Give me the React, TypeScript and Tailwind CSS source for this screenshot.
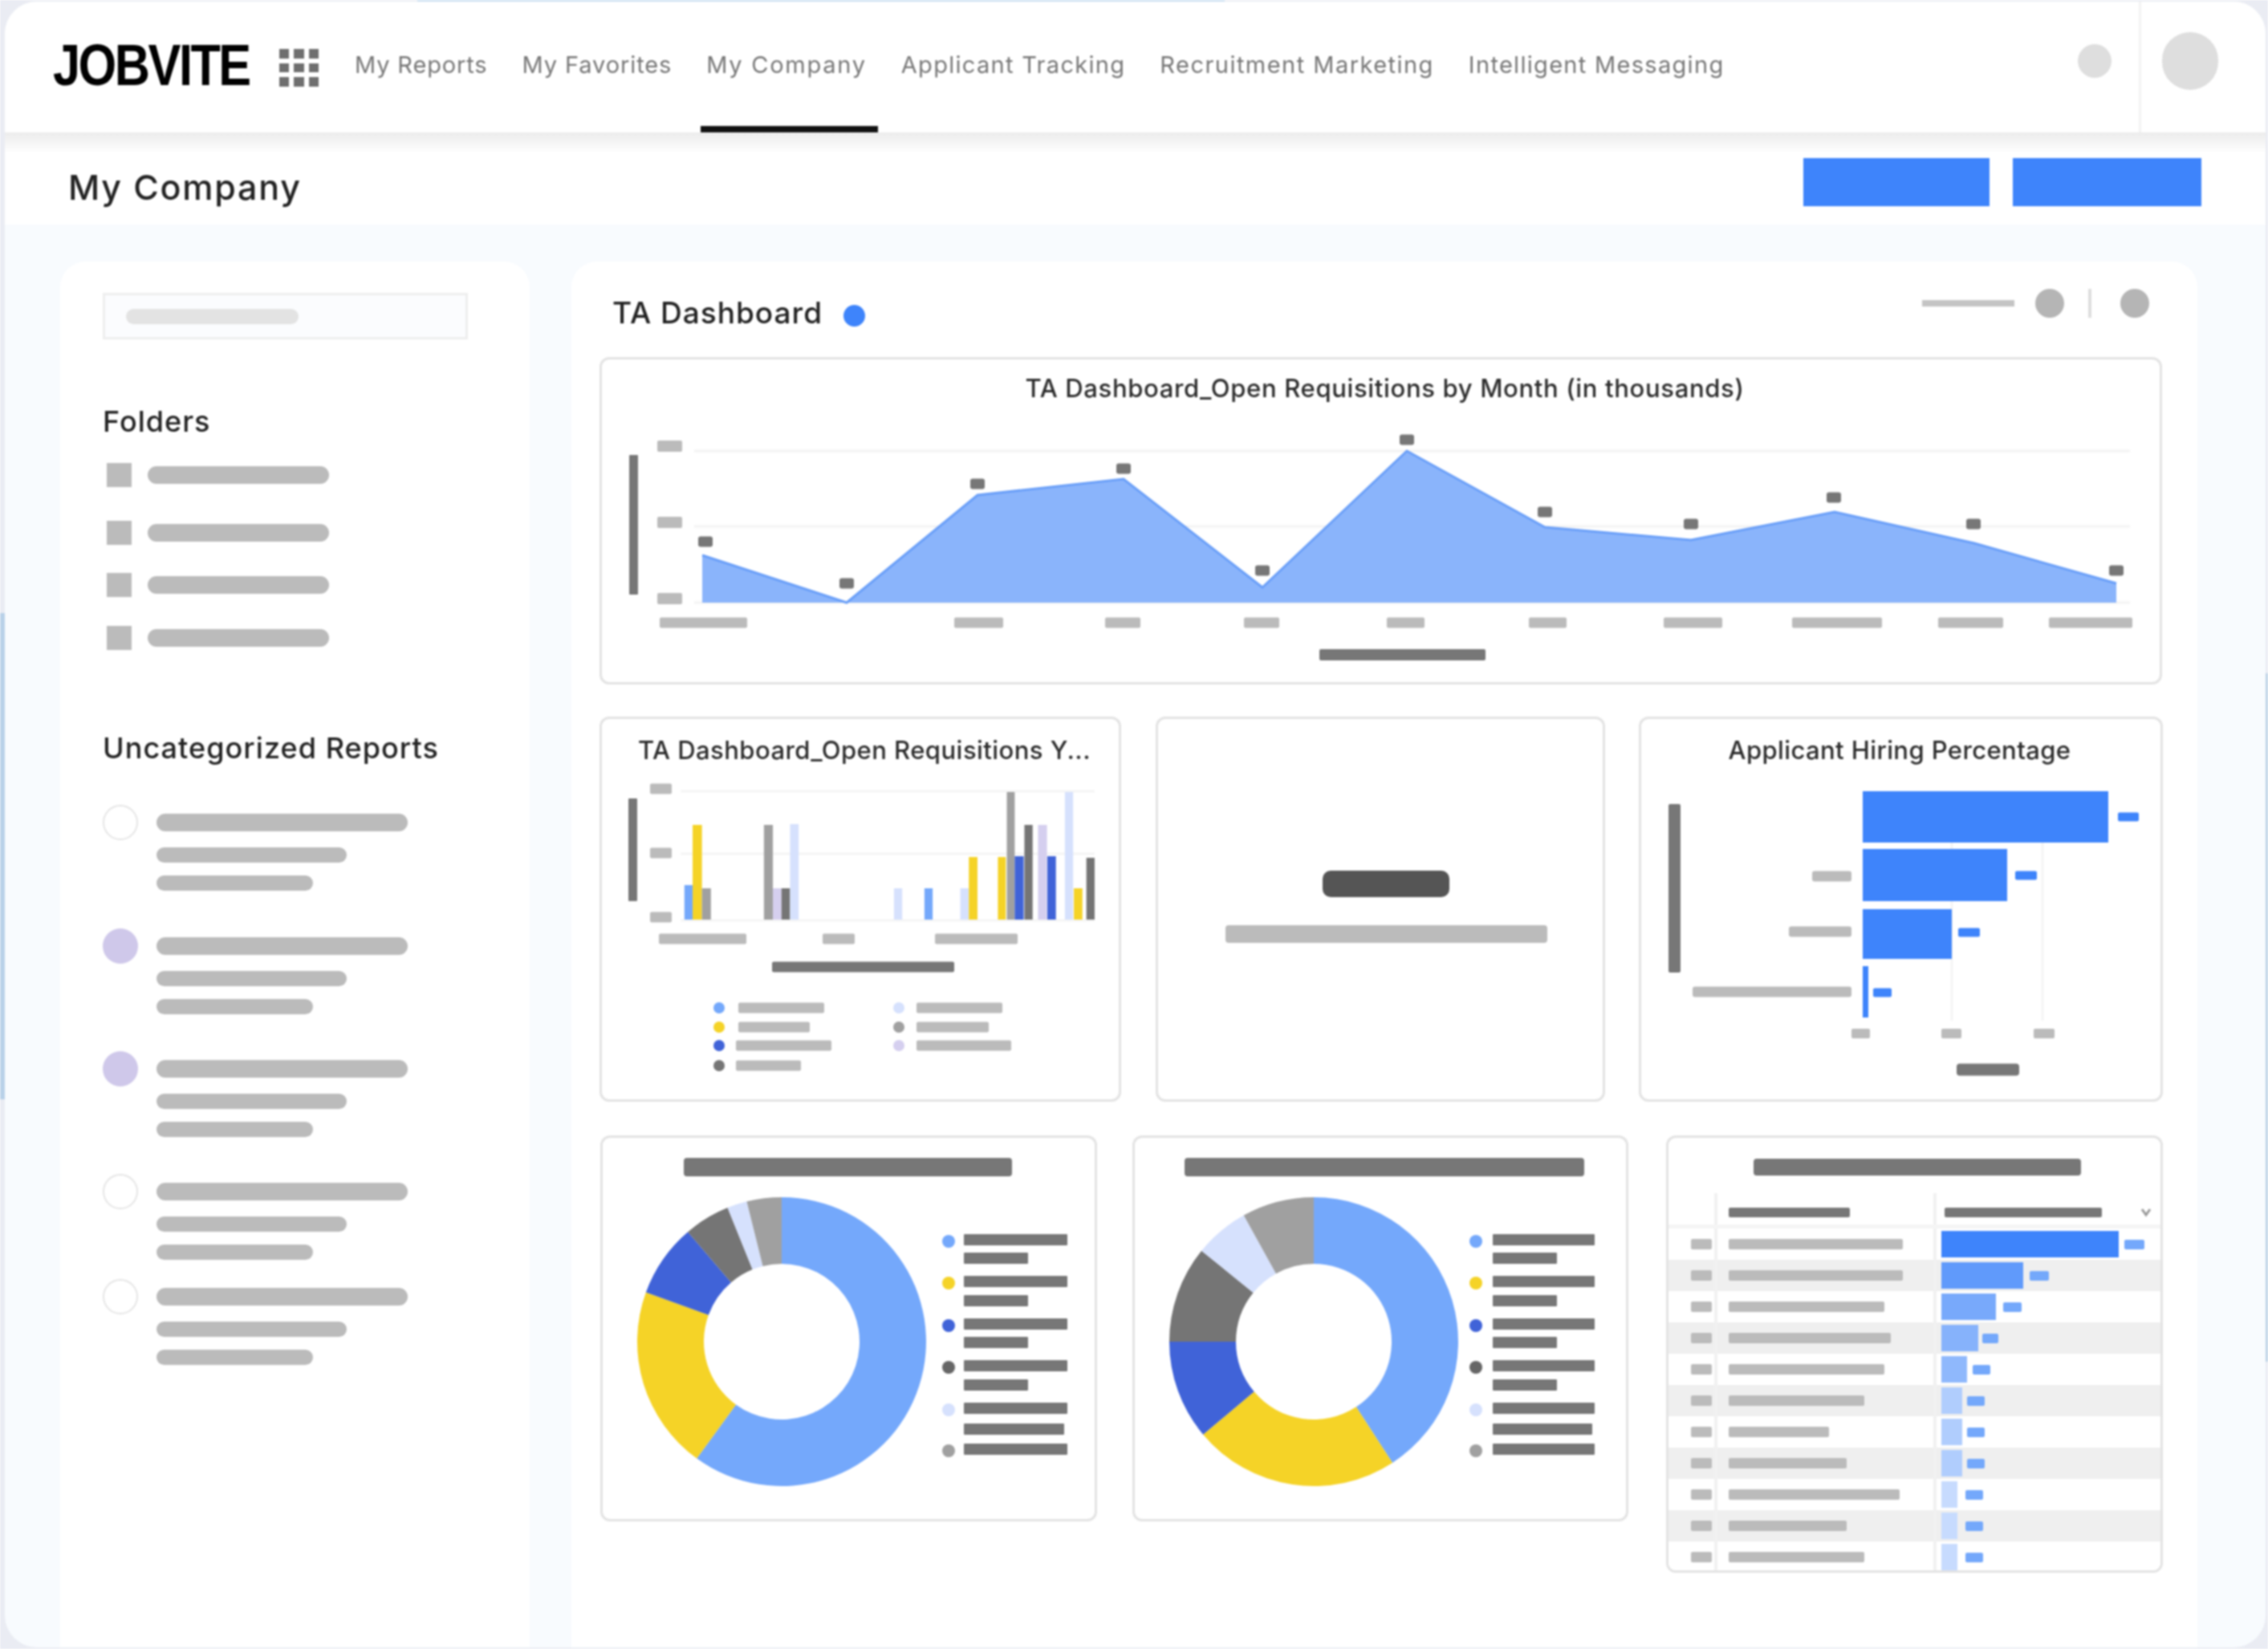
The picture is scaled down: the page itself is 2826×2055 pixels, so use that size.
import React from 'react';

const G = '#bbbbbb';
const D = '#777777';
const BLUE = '#3e84fb';
const SKY = '#74a8fb';
const YEL = '#f5d327';
const DEEP = '#4063d8';
const LIGHT = '#d6e1fd';
const GRAY = '#a0a0a0';
const DGRAY = '#757575';
const PUR = '#d5cfef';

const Bar = ({ a, b, cy, h, c, r = 2 }: { a: number; b: number; cy: number; h: number; c: string; r?: number }) => (
  <rect x={a} y={cy - h / 2} width={b - a} height={h} fill={c} rx={r} />
);

const Card = ({ className, children }: { className: string; children?: React.ReactNode }) => (
  <div className={`box-border border-[3px] border-[#e3e3e3] rounded-[12px] bg-white flex flex-col items-center overflow-hidden shrink-0 ${className}`}>
    {children}
  </div>
);

const ChartTitle = ({ children, className }: { children: React.ReactNode; className: string }) => (
  <div className={`h-[40px] leading-[40px] font-medium text-[#2b2b2b] whitespace-nowrap ${className}`}>{children}</div>
);

const linePts: [number, number][] = [
  [875, 692], [1055, 751], [1218, 617], [1400, 597], [1573, 732], [1753, 562],
  [1925, 657], [2107, 673], [2286, 638], [2460, 677], [2637, 727],
];
const lineLabels: [number, number][] = [
  [879, 675], [1055, 727], [1218, 603], [1400, 584], [1573, 711], [1753, 548],
  [1925, 638], [2107, 653], [2285, 620], [2459, 653], [2637, 711],
];
const lineTicks: [number, number][] = [
  [822, 931], [1189, 1250], [1377, 1421], [1550, 1594], [1728, 1775], [1905, 1952],
  [2073, 2146], [2233, 2345], [2415, 2496], [2553, 2657],
];

const LineChart = () => {
  const pts = linePts.map((p) => p.join(',')).join(' ');
  return (
    <svg width={1941} height={346} viewBox="750 504 1941 346" className="block">
      {[562, 656, 751].map((y) => (
        <rect key={y} x={865} y={y - 1.5} width={1789} height={3} fill="#f3f3f3" />
      ))}
      <Bar a={784} b={795} cy={654} h={174} c={D} r={1} />
      {[556, 651, 746].map((y) => (
        <Bar key={y} a={819} b={850} cy={y} h={14} c={G} />
      ))}
      <polygon points={`875,751 ${pts} 2637,751`} fill="#8ab4fb" />
      <polyline points={pts} fill="none" stroke="#6a9ff8" strokeWidth={3} />
      {lineLabels.map(([x, y]) => (
        <Bar key={x} a={x - 9} b={x + 9} cy={y} h={13} c={D} r={3} />
      ))}
      {lineTicks.map(([a, b]) => (
        <Bar key={a} a={a} b={b} cy={776} h={13} c={G} />
      ))}
      <Bar a={1644} b={1851} cy={816} h={14} c={D} />
    </svg>
  );
};

const colBars: [number, number, string, number][] = [
  [275, 298, SKY, 1103], [298, 324, YEL, 1028], [324, 349, GRAY, 1107], [497, 522, GRAY, 1028],
  [522, 546, PUR, 1107], [546, 570, DGRAY, 1107], [570, 594, LIGHT, 1027], [860, 883, LIGHT, 1107],
  [945, 968, SKY, 1107], [1045, 1069, LIGHT, 1107], [1069, 1093, YEL, 1068], [1150, 1172, YEL, 1068],
  [1175, 1197, GRAY, 987], [1197, 1222, DEEP, 1067], [1224, 1247, DGRAY, 1028], [1262, 1287, PUR, 1028],
  [1288, 1312, DEEP, 1067], [1337, 1360, LIGHT, 987], [1362, 1386, YEL, 1107], [1397, 1420, DGRAY, 1069],
];

const legendA: [number, number, number, number, string][] = [
  [896, 920, 1027, 1256, SKY], [896, 920, 1009, 1280, YEL], [896, 917, 1036, 1303, DEEP], [896, 917, 998, 1328, DGRAY],
  [1120, 1142, 1249, 1256, LIGHT], [1120, 1142, 1232, 1280, GRAY], [1120, 1142, 1260, 1303, PUR],
];

const ColumnChart = () => (
  <svg width={644} height={415} viewBox="750 955 644 415" className="block">
    {[986, 1064, 1147].map((y) => (
      <rect key={y} x={848} y={y - 1.5} width={516} height={3} fill="#f5f5f5" />
    ))}
    <Bar a={783} b={794} cy={1059} h={128} c={D} r={1} />
    {[983, 1063, 1143].map((y) => (
      <Bar key={y} a={810} b={837} cy={y} h={13} c={G} />
    ))}
    {colBars.map(([a, b, c, top]) => (
      <rect key={a} x={730 + a / 2.24} y={top} width={(b - a) / 2.24} height={1146 - top} fill={c} />
    ))}
    {[[821, 930], [1025, 1065], [1165, 1268]].map(([a, b]) => (
      <Bar key={a} a={a} b={b} cy={1170} h={13} c={G} />
    ))}
    <Bar a={962} b={1189} cy={1205} h={13} c={D} />
    {legendA.map(([dot, a, b, y, c]) => (
      <g key={`${dot}${y}`}>
        <circle cx={dot} cy={y} r={7} fill={c} />
        <Bar a={a} b={b} cy={y} h={13} c={G} />
      </g>
    ))}
  </svg>
);

const HBarChart = () => (
  <svg width={647} height={415} viewBox="2045 955 647 415" className="block">
    {[2432, 2545].map((x) => (
      <rect key={x} x={x - 1.5} y={986} width={3} height={286} fill="#f5f5f5" />
    ))}
    <Bar a={2079} b={2094} cy={1107} h={210} c={D} r={2} />
    <rect x={2321} y={986} width={306} height={64} fill={BLUE} />
    <rect x={2321} y={1058} width={180} height={65} fill={BLUE} />
    <rect x={2321} y={1133} width={111} height={62} fill={BLUE} />
    <rect x={2321} y={1204} width={7} height={64} fill={BLUE} />
    <Bar a={2639} b={2665} cy={1018} h={11} c={BLUE} />
    <Bar a={2511} b={2538} cy={1091} h={11} c={BLUE} />
    <Bar a={2440} b={2467} cy={1162} h={11} c={BLUE} />
    <Bar a={2334} b={2357} cy={1237} h={11} c={BLUE} />
    <Bar a={2258} b={2307} cy={1092} h={13} c={G} r={3} />
    <Bar a={2229} b={2307} cy={1161} h={13} c={G} r={3} />
    <Bar a={2109} b={2307} cy={1236} h={13} c={G} r={3} />
    {[[2307, 2330], [2419, 2444], [2534, 2560]].map(([a, b]) => (
      <Bar key={a} a={a} b={b} cy={1288} h={12} c={G} />
    ))}
    <Bar a={2438} b={2516} cy={1333} h={15} c={D} r={4} />
  </svg>
);

const arc = (cx: number, cy: number, r0: number, r1: number, s: number, e: number) => {
  const p = (r: number, a: number) => {
    const t = ((a - 90) * Math.PI) / 180;
    return `${(cx + r * Math.cos(t)).toFixed(2)} ${(cy + r * Math.sin(t)).toFixed(2)}`;
  };
  const large = e - s > 180 ? 1 : 0;
  return `M${p(r1, s)} A${r1} ${r1} 0 ${large} 1 ${p(r1, e)} L${p(r0, e)} A${r0} ${r0} 0 ${large} 0 ${p(r0, s)} Z`;
};

const Donut = ({ cx, stops, dotX, barA, barB, subB, vb, w }: {
  cx: number; stops: number[]; dotX: number; barA: number; barB: number; subB: number[]; vb: string; w: number;
}) => {
  const cols = [SKY, YEL, DEEP, DGRAY, LIGHT, GRAY];
  const rows = [1547, 1599, 1652, 1704, 1757, 1808];
  const subs = [1568, 1621, 1673, 1726, 1781];
  return (
    <svg width={w} height={413} viewBox={vb} className="block">
      {cols.map((c, i) => (
        <path key={c} d={arc(cx, 1672, 97, 180, i === 0 ? 0 : stops[i - 1], stops[i])} fill={c} />
      ))}
      {rows.map((y, i) => (
        <g key={y}>
          <circle cx={dotX} cy={y} r={8} fill={i === 3 ? '#666666' : cols[i]} />
          <Bar a={barA} b={barB} cy={y - 2} h={14} c={D} r={1} />
        </g>
      ))}
      {subs.map((y, i) => (
        <Bar key={y} a={barA} b={subB[i]} cy={y} h={14} c={D} r={1} />
      ))}
    </svg>
  );
};

const tableRows: { label: number; bar: number; color: string; val: number; gap: number }[] = [
  { label: 217, bar: 221, color: '#3e84fb', val: 25, gap: 7 },
  { label: 217, bar: 102, color: '#609afb', val: 24, gap: 8 },
  { label: 194, bar: 68, color: '#78a9fb', val: 23, gap: 9 },
  { label: 202, bar: 46, color: '#86b2fb', val: 20, gap: 5 },
  { label: 194, bar: 32, color: '#8fb8fc', val: 22, gap: 7 },
  { label: 169, bar: 26, color: '#b0cdfd', val: 22, gap: 6 },
  { label: 125, bar: 26, color: '#b0cdfd', val: 22, gap: 6 },
  { label: 147, bar: 26, color: '#b0cdfd', val: 22, gap: 6 },
  { label: 213, bar: 20, color: '#c7dbfe', val: 22, gap: 10 },
  { label: 147, bar: 20, color: '#c7dbfe', val: 22, gap: 10 },
  { label: 169, bar: 20, color: '#c7dbfe', val: 22, gap: 10 },
];

const TableCard = () => (
  <Card className="w-[619px] h-[545px]">
    <div className="mt-[26px] ml-[6px] w-[408px] h-[21px] rounded-[4px] bg-[#777777] shrink-0" />
    <div className="self-stretch flex h-[44px] mt-[22px] shrink-0 border-b-[5px] border-[#f5f5f5]">
      <div className="w-[61px] border-r-[4px] border-[#f1f1f1]" />
      <div className="w-[273px] border-r-[4px] border-[#f1f1f1] pl-[14px] pt-[8px] flex items-center">
        <div className="w-[151px] h-[12px] bg-[#777777] rounded-[2px]" />
      </div>
      <div className="flex-1 flex items-center pl-[10px] pt-[8px]">
        <div className="w-[196px] h-[12px] bg-[#777777] rounded-[2px]" />
        <svg width={14} height={12} viewBox="0 0 14 12" className="ml-[48px]">
          <path d="M2 2 L7 9 L12 2" fill="none" stroke="#999999" strokeWidth={3} />
        </svg>
      </div>
    </div>
    <div className="self-stretch flex flex-col">
      {tableRows.map((r, i) => (
        <div key={i} className={`flex h-[39px] shrink-0 items-center ${i % 2 === 1 ? 'bg-[#efefef]' : 'bg-white'}`}>
          <div className="w-[61px] h-full border-r-[4px] border-[#f1f1f1] flex items-center pl-[28px]">
            <div className="w-[26px] h-[13px] bg-[#bbbbbb] rounded-[2px]" />
          </div>
          <div className="w-[273px] h-full border-r-[4px] border-[#f1f1f1] flex items-center pl-[14px]">
            <div className="h-[13px] bg-[#bbbbbb] rounded-[2px]" style={{ width: r.label }} />
          </div>
          <div className="flex-1 flex items-center h-full pl-[6px]">
            <div className="h-[33px]" style={{ width: r.bar, backgroundColor: r.color }} />
            <div className="h-[12px] bg-[#74a8fb] rounded-[2px]" style={{ width: r.val, marginLeft: r.gap }} />
          </div>
        </div>
      ))}
    </div>
  </Card>
);

const navItems: { label: string; tracking: string }[] = [
  { label: 'My Reports', tracking: 'tracking-[0.85px]' },
  { label: 'My Favorites', tracking: 'tracking-[0.9px]' },
  { label: 'My Company', tracking: 'tracking-[1.74px]' },
  { label: 'Applicant Tracking', tracking: 'tracking-[1.3px]' },
  { label: 'Recruitment Marketing', tracking: 'tracking-[1.46px]' },
  { label: 'Intelligent Messaging', tracking: 'tracking-[1.3px]' },
];

const FolderRow = ({ className }: { className: string }) => (
  <div className={`flex items-center h-[30px] pl-[5px] gap-[20px] ${className}`}>
    <div className="w-[31px] h-[30px] bg-[#bbbbbb]" />
    <div className="w-[226px] h-[22px] rounded-full bg-[#bbbbbb]" />
  </div>
);

const ReportItem = ({ className, filled }: { className: string; filled?: boolean }) => (
  <div className={`flex gap-[23px] ${className}`}>
    <div className={`box-border w-[44px] h-[44px] rounded-full ${filled ? 'bg-[#cfc8ea]' : 'border-[2px] border-[#e5e5e5] bg-white'}`} />
    <div className="flex flex-col pt-[11px]">
      <div className="w-[313px] h-[22px] rounded-full bg-[#bbbbbb]" />
      <div className="w-[237px] h-[19px] rounded-full bg-[#bbbbbb] mt-[20px]" />
      <div className="w-[195px] h-[19px] rounded-full bg-[#bbbbbb] mt-[16px]" />
    </div>
  </div>
);

export default function App() {
  return (
    <div className="relative w-[2826px] h-[2055px] overflow-hidden bg-[#eaecf3] font-['Inter','Noto_Sans',sans-serif] blur-[1.2px]">
      <div className="absolute left-[520px] top-0 w-[1006px] h-[2px] bg-[#c5dcef]" />
      <div className="absolute left-0 top-[764px] w-[6px] h-[606px] bg-[#b9d1e8]" />
      <div className="absolute right-0 top-[839px] w-[3px] h-[858px] bg-[#bdd2e6]" />

      <div className="ml-[6px] mr-[3px] mt-[2px] h-[2051px] rounded-[40px] bg-[#f8fbfe] flex flex-col overflow-hidden">
        <header className="h-[163px] bg-white flex items-stretch shrink-0">
          <div className="w-[244px] ml-[60px] mt-[38px] h-[80px] flex items-center">
            <span className="font-['Liberation_Sans',sans-serif] font-bold text-[73px] leading-none text-black tracking-[-3px] origin-left scale-x-[0.84] whitespace-nowrap">
              JOBVITE
            </span>
          </div>
          <div className="ml-[38px] mt-[59px] w-[49px] h-[47px] grid grid-cols-3 gap-[6px]">
            {Array.from({ length: 9 }).map((_, i) => (
              <div key={i} className="bg-[#6f6f6f]" />
            ))}
          </div>
          <nav className="ml-[45px] flex gap-[43px]">
            {navItems.map((n) => (
              <div key={n.label} className={`relative h-full flex items-center pb-[5px] text-[29px] text-[#777777] whitespace-nowrap ${n.tracking}`}>
                {n.label}
                {n.label === 'My Company' && <div className="absolute -left-[7px] -right-[14px] bottom-0 h-[8px] bg-[#111111]" />}
              </div>
            ))}
          </nav>
          <div className="flex-1" />
          <div className="mt-[53px] w-[42px] h-[42px] rounded-full bg-[#dedede]" />
          <div className="ml-[34px] w-[3px] bg-[#f3f3f3]" />
          <div className="ml-[26px] mr-[59px] mt-[38px] w-[70px] h-[72px] rounded-full bg-[#dedede]" />
        </header>

        <div className="h-[115px] shrink-0 flex items-center bg-linear-to-b from-[#ececec] to-white to-[26px]">
          <div className="ml-[79px] mt-[21px] text-[43px] font-medium text-[#222222] leading-none tracking-[1.8px]">My Company</div>
          <div className="flex-1" />
          <div className="w-[232px] h-[60px] mt-[9px] bg-[#3e84fb]" />
          <div className="w-[235px] h-[60px] mt-[9px] ml-[29px] mr-[80px] bg-[#3e84fb]" />
        </div>

        <div className="flex-1 flex pt-[46px] pl-[69px] items-stretch">
          <aside className="w-[585px] bg-white rounded-t-[32px] pt-[39px] pl-[53px] shrink-0">
            <div className="box-border w-[455px] h-[58px] border-[3px] border-[#eeeeee] bg-[#fbfcfe] flex items-center pl-[26px]">
              <div className="w-[215px] h-[19px] rounded-full bg-[#e3e3e3]" />
            </div>
            <div className="mt-[82px] h-[40px] leading-[40px] text-[36px] font-medium text-[#222222] tracking-[1px]">Folders</div>
            <FolderRow className="mt-[32px]" />
            <FolderRow className="mt-[42px]" />
            <FolderRow className="mt-[35px]" />
            <FolderRow className="mt-[36px]" />
            <div className="mt-[102px] h-[40px] leading-[40px] text-[36px] font-medium text-[#222222] tracking-[1.05px] whitespace-nowrap">Uncategorized Reports</div>
            <ReportItem className="mt-[51px]" />
            <ReportItem className="mt-[47px]" filled />
            <ReportItem className="mt-[46px]" filled />
            <ReportItem className="mt-[46px]" />
            <ReportItem className="mt-[24px]" />
          </aside>

          <main className="ml-[52px] w-[2026px] bg-white rounded-t-[32px] pl-[35px] pt-[34px] shrink-0">
            <div className="h-[85px] flex items-start">
              <div className="ml-[16px] mt-[10px] h-[40px] leading-[40px] text-[37px] font-medium text-[#222222] tracking-[1px]">TA Dashboard</div>
              <div className="ml-[26px] mt-[20px] w-[27px] h-[27px] rounded-full bg-[#3e84fb]" />
              <div className="flex-1" />
              <div className="flex items-center h-[36px] mr-[60px]">
                <div className="w-[115px] h-[8px] bg-[#c4c4c4]" />
                <div className="ml-[26px] w-[36px] h-[36px] rounded-full bg-[#b5b5b5]" />
                <div className="ml-[30px] w-[4px] h-[36px] bg-[#dddddd]" />
                <div className="ml-[36px] w-[36px] h-[36px] rounded-full bg-[#b5b5b5]" />
              </div>
            </div>

            <Card className="w-[1947px] h-[408px]">
              <ChartTitle className="mt-[16px] ml-[10px] text-[31px] tracking-[0.66px]">TA Dashboard_Open Requisitions by Month (in thousands)</ChartTitle>
              <LineChart />
            </Card>

            <div className="mt-[40px] flex">
              <Card className="w-[650px] h-[480px]">
                <ChartTitle className="mt-[19px] ml-[10px] text-[31px] tracking-[0.46px]">TA Dashboard_Open Requisitions Y...</ChartTitle>
                <ColumnChart />
              </Card>
              <Card className="ml-[43px] w-[560px] h-[480px] justify-start">
                <div className="mt-[189px] ml-[14px] w-[158px] h-[33px] rounded-[10px] bg-[#555555]" />
                <div className="mt-[35px] ml-[14px] w-[401px] h-[22px] rounded-[4px] bg-[#bbbbbb]" />
              </Card>
              <Card className="ml-[42px] w-[653px] h-[480px]">
                <ChartTitle className="mt-[19px] ml-[-3px] text-[31px] tracking-[0.4px]">Applicant Hiring Percentage</ChartTitle>
                <HBarChart />
              </Card>
            </div>

            <div className="mt-[42px] flex items-start">
              <Card className="ml-[1px] w-[619px] h-[481px]">
                <div className="mt-[25px] ml-[-3px] w-[409px] h-[23px] rounded-[4px] bg-[#777777] shrink-0" />
                <div className="mt-[14px]">
                  <Donut w={613} vb="751 1480 613 413" cx={974} stops={[216, 290, 319.5, 338, 346, 360]} dotX={1182} barA={1201} barB={1330} subB={[1281, 1281, 1281, 1281, 1326]} />
                </div>
              </Card>
              <Card className="ml-[44px] w-[618px] h-[481px]">
                <div className="mt-[25px] ml-[9px] w-[498px] h-[23px] rounded-[4px] bg-[#777777] shrink-0" />
                <div className="mt-[14px]">
                  <Donut w={612} vb="1414 1480 612 413" cx={1637} stops={[147, 230, 270, 309, 331, 360]} dotX={1839} barA={1860} barB={1987} subB={[1940, 1940, 1940, 1940, 1984]} />
                </div>
              </Card>
              <div className="ml-[47px]">
                <TableCard />
              </div>
            </div>
          </main>
        </div>
      </div>
    </div>
  );
}
